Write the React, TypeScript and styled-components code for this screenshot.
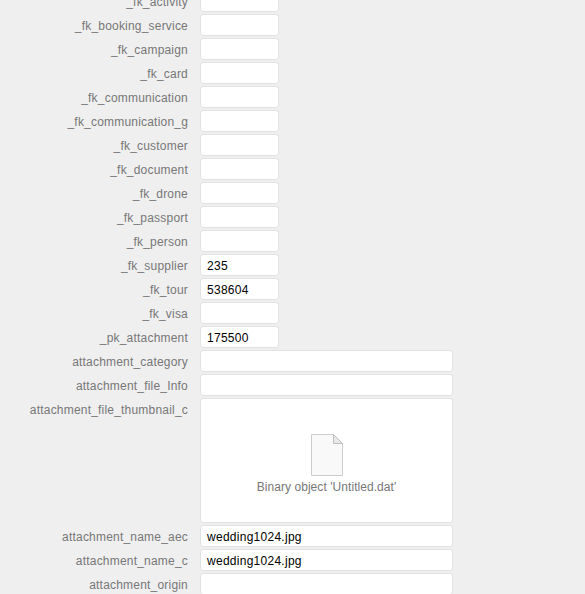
import { createGlobalStyle } from 'styled-components';
import styled from 'styled-components';

const GlobalStyle = createGlobalStyle`
  html, body {
    margin: 0;
    padding: 0;
    height: 594px;
    overflow: hidden;
    background: #efefef;
    font-family: "Liberation Sans", Arial, sans-serif;
  }
`;

const Form = styled.div`
  display: flex;
  flex-direction: column;
  gap: 2px;
  margin-top: -10px;
`;

const Row = styled.div`
  display: flex;
  align-items: flex-start;
  gap: 12px;
`;

const Label = styled.div`
  width: 188px;
  flex: none;
  height: 22px;
  line-height: 24px;
  text-align: right;
  font-size: 12px;
  letter-spacing: 0.2px;
  color: #777777;
  white-space: nowrap;
`;

const Field = styled.div<{ $wide?: boolean }>`
  box-sizing: border-box;
  width: ${(props) => (props.$wide ? '253px' : '79px')};
  height: 22px;
  padding: 0 6px;
  line-height: 23px;
  font-size: 12px;
  letter-spacing: 0.27px;
  color: #000000;
  background: #ffffff;
  border: 1px solid #e2e2e2;
  border-radius: 3px;
  white-space: nowrap;
`;

const BinaryField = styled.div`
  box-sizing: border-box;
  width: 253px;
  height: 125px;
  display: flex;
  flex-direction: column;
  align-items: center;
  padding-top: 34px;
  background: #ffffff;
  border: 1px solid #e2e2e2;
  border-radius: 3px;
`;

const BinaryCaption = styled.div`
  margin-top: 2px;
  font-size: 12px;
  line-height: 16px;
  letter-spacing: 0.06px;
  color: #777777;
`;

const FileIcon = () => (
  <svg width="34" height="44" viewBox="0 0 34 44">
    <path d="M1.5 1.5H23.5L32.5 10.5V42.5H1.5Z" fill="#f9f9f9" stroke="#cccccc" />
    <path d="M23.5 1.5V10.5H32.5Z" fill="#e8e8e8" stroke="#bdbdbd" />
  </svg>
);

const narrowRows = [
  ['_fk_activity', ''],
  ['_fk_booking_service', ''],
  ['_fk_campaign', ''],
  ['_fk_card', ''],
  ['_fk_communication', ''],
  ['_fk_communication_g', ''],
  ['_fk_customer', ''],
  ['_fk_document', ''],
  ['_fk_drone', ''],
  ['_fk_passport', ''],
  ['_fk_person', ''],
  ['_fk_supplier', '235'],
  ['_fk_tour', '538604'],
  ['_fk_visa', ''],
  ['_pk_attachment', '175500'],
];

const App = () => {
  return (
    <>
      <GlobalStyle />
      <Form>
        {narrowRows.map(([label, value]) => (
          <Row key={label}>
            <Label>{label}</Label>
            <Field>{value}</Field>
          </Row>
        ))}
        <Row>
          <Label>attachment_category</Label>
          <Field $wide />
        </Row>
        <Row>
          <Label>attachment_file_Info</Label>
          <Field $wide />
        </Row>
        <Row>
          <Label>attachment_file_thumbnail_c</Label>
          <BinaryField>
            <FileIcon />
            <BinaryCaption>Binary object 'Untitled.dat'</BinaryCaption>
          </BinaryField>
        </Row>
        <Row>
          <Label>attachment_name_aec</Label>
          <Field $wide>wedding1024.jpg</Field>
        </Row>
        <Row>
          <Label>attachment_name_c</Label>
          <Field $wide>wedding1024.jpg</Field>
        </Row>
        <Row>
          <Label>attachment_origin</Label>
          <Field $wide />
        </Row>
      </Form>
    </>
  );
};

export default App;
